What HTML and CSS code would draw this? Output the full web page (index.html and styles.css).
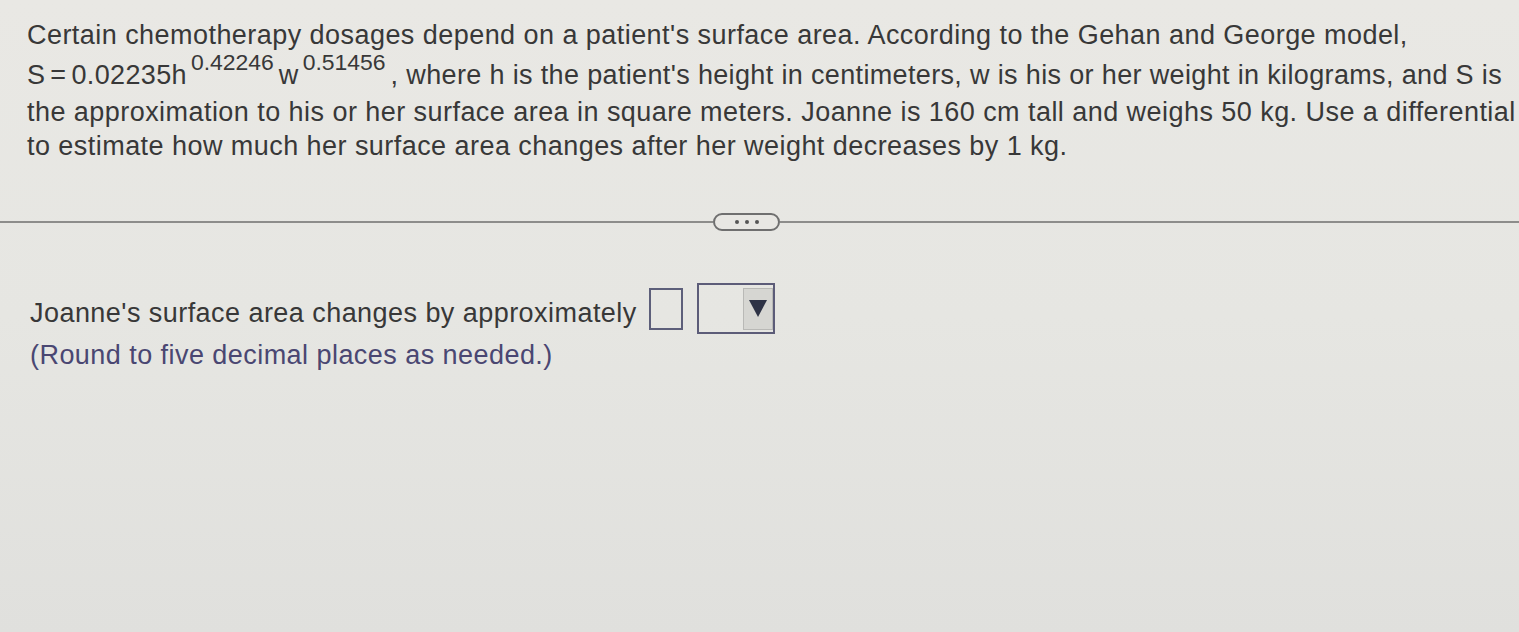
FILE: index.html
```html
<!DOCTYPE html>
<html lang="en">
<head>
<meta charset="utf-8">
<title>Surface area differential</title>
<link rel="stylesheet" href="styles.css">
</head>
<body>
<div class="page">
  <p class="question">Certain chemotherapy dosages depend on a patient's surface area. According to the Gehan and George model,<br><span class="formula-line"><span class="formula">S<span class="eq">=</span>0.02235h<sup>0.42246</sup>w<sup>0.51456</sup></span>, where h is the patient's height in centimeters, w is his or her weight in kilograms, and S is</span><br>the approximation to his or her surface area in square meters. Joanne is 160 cm tall and weighs 50 kg. Use a differential<br>to estimate how much her surface area changes after her weight decreases by 1 kg.</p>

  <div class="divider">
    <span class="rule rule-left"></span>
    <span class="pill"><i></i><i></i><i></i></span>
    <span class="rule rule-right"></span>
  </div>

  <div class="answer">
    <div class="answer-row">
      <span class="answer-text">Joanne's surface area changes by approximately</span>
      <span class="input-box"></span>
      <span class="select-box"><span class="select-btn"><span class="arrow"></span></span></span>
    </div>
    <p class="hint">(Round to five decimal places as needed.)</p>
  </div>
</div>
</body>
</html>
```

FILE: styles.css
```css
html, body {
  margin: 0;
  padding: 0;
}
body {
  width: 1519px;
  height: 632px;
  overflow: hidden;
  background: linear-gradient(180deg, #e9e8e4 0%, #e6e6e2 50%, #e0e0dd 100%);
  font-family: "Liberation Sans", Arial, sans-serif;
  color: #383838;
}
.page {
  padding-top: 18px;
}
.question {
  margin: 0;
  padding-left: 27px;
  font-size: 27px;
  letter-spacing: 0.45px;
  line-height: 34px;
  white-space: nowrap;
}
.formula-line {
  display: inline-block;
  padding: 6px 0 3px 0;
  letter-spacing: 0.35px;
}
.formula sup {
  font-size: 0.85em;
  line-height: 0;
  vertical-align: 14px;
  letter-spacing: 0;
  margin: 0 5px 0 4px;
}
.eq {
  margin: 0 5px;
}
.divider {
  display: flex;
  align-items: center;
  margin-top: 49px;
  height: 20px;
}
.rule {
  height: 2px;
  background: #8d8d8b;
}
.rule-left {
  width: 713px;
}
.rule-right {
  flex: 1;
}
.pill {
  width: 63px;
  height: 14px;
  border: 2px solid #6f6f6f;
  border-radius: 10px;
  display: flex;
  align-items: center;
  justify-content: center;
  gap: 6px;
  background: #e8e7e3;
}
.pill i {
  width: 4px;
  height: 4px;
  border-radius: 50%;
  background: #555;
}
.answer {
  padding-left: 30px;
  margin-top: 51px;
}
.answer-row {
  display: flex;
  align-items: flex-start;
}
.answer-text {
  font-size: 27px;
  line-height: 30px;
  letter-spacing: 0.45px;
  margin-top: 15px;
  color: #383838;
}
.input-box {
  width: 30px;
  height: 38px;
  border: 2px solid #5d5f7a;
  margin-left: 12px;
  margin-top: 5px;
}
.select-box {
  width: 74px;
  height: 47px;
  border: 2px solid #5c5c78;
  margin-left: 14px;
  display: flex;
  justify-content: flex-end;
  align-items: center;
}
.select-btn {
  width: 28px;
  height: 40px;
  background: #d6d6d2;
  border: 1px solid #b9b9b6;
  display: flex;
  align-items: center;
  justify-content: center;
}
.arrow {
  width: 0;
  height: 0;
  border-left: 9px solid transparent;
  border-right: 9px solid transparent;
  border-top: 17px solid #2e3346;
}
.hint {
  margin: 6px 0 0 0;
  font-size: 27px;
  line-height: 30px;
  letter-spacing: 0.45px;
  color: #4a4772;
}
```
